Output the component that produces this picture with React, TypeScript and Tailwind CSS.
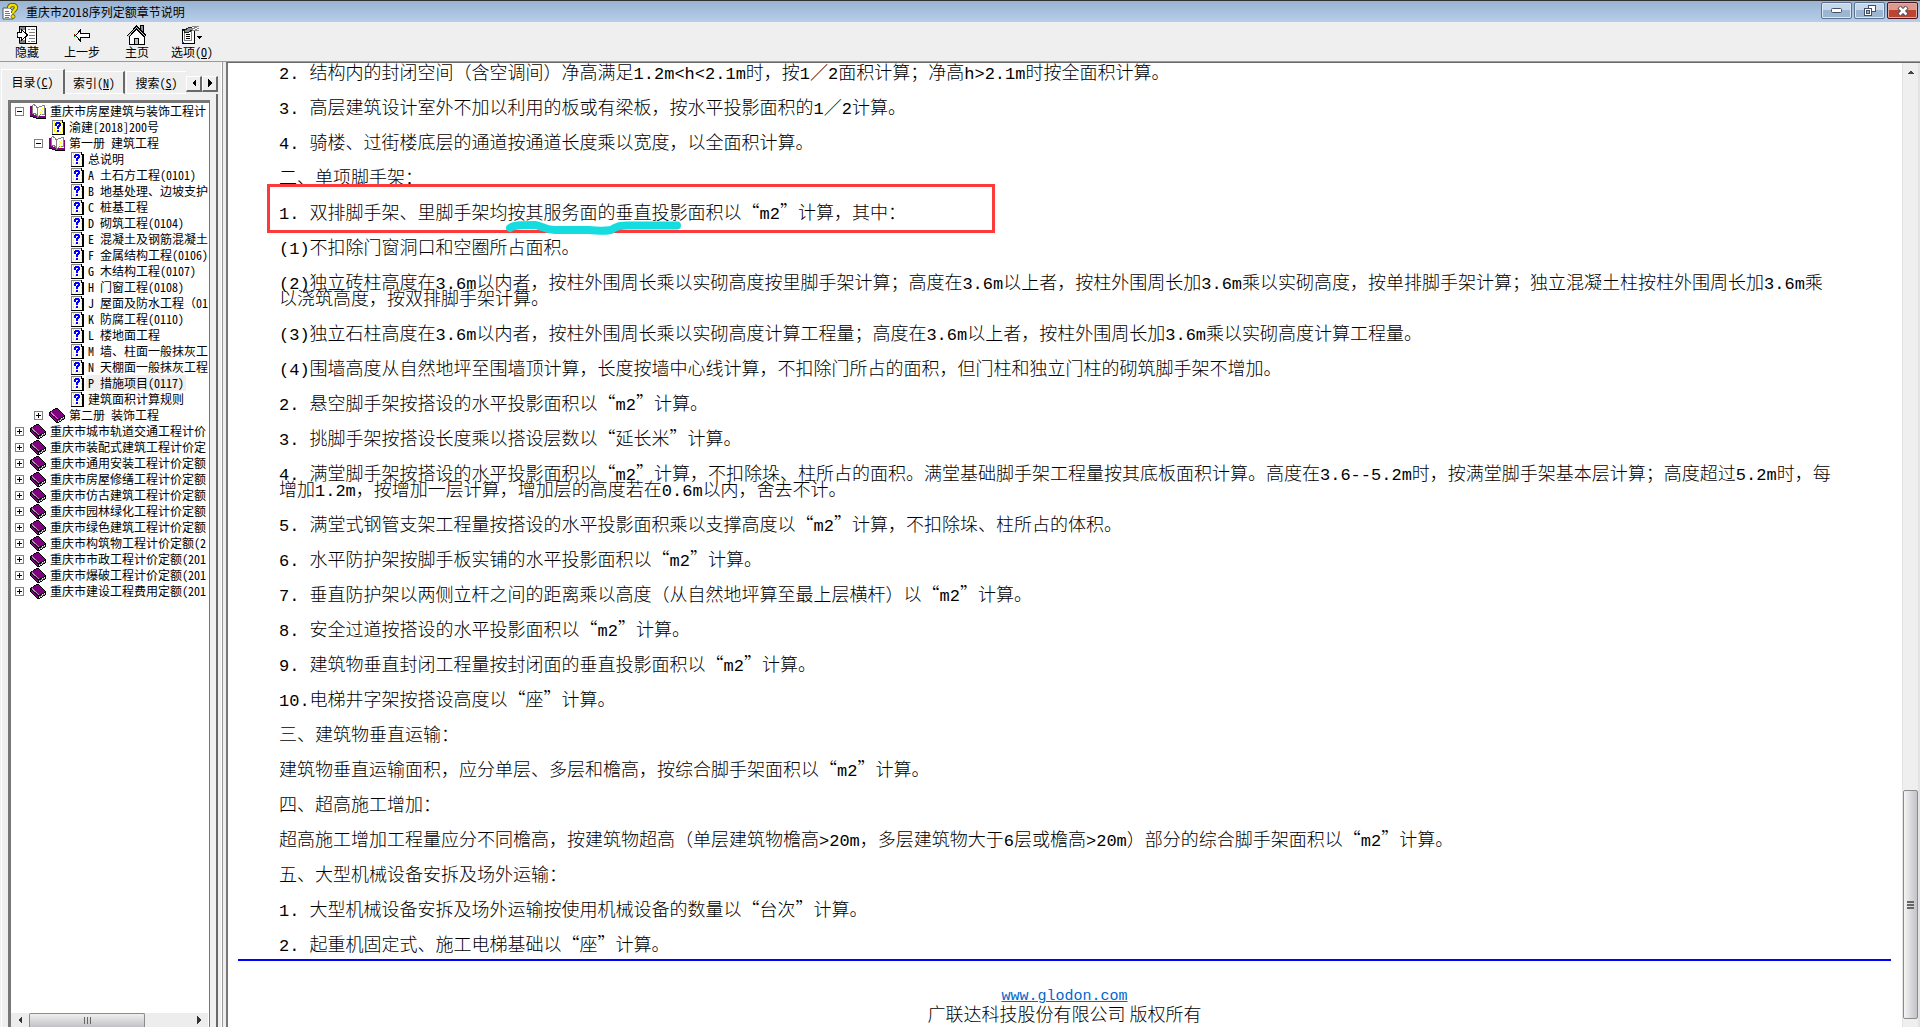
import React, { useState } from 'react';

const SONG = "font-['Noto_Sans_Mono_CJK_SC','Noto_Sans_CJK_SC',monospace]";

type TreeNode = {
  label: string;
  open?: boolean;
  children?: TreeNode[];
};

const tree: TreeNode[] = [
  {
    label: '重庆市房屋建筑与装饰工程计',
    open: true,
    children: [
      { label: '渝建[2018]200号' },
      {
        label: '第一册 建筑工程',
        open: true,
        children: [
          { label: '总说明' },
          { label: 'A 土石方工程(0101)' },
          { label: 'B 地基处理、边坡支护' },
          { label: 'C 桩基工程' },
          { label: 'D 砌筑工程(0104)' },
          { label: 'E 混凝土及钢筋混凝土' },
          { label: 'F 金属结构工程(0106)' },
          { label: 'G 木结构工程(0107)' },
          { label: 'H 门窗工程(0108)' },
          { label: 'J 屋面及防水工程（01' },
          { label: 'K 防腐工程(0110)' },
          { label: 'L 楼地面工程' },
          { label: 'M 墙、柱面一般抹灰工' },
          { label: 'N 天棚面一般抹灰工程' },
          { label: 'P 措施项目(0117)' },
          { label: '建筑面积计算规则' },
        ],
      },
      { label: '第二册 装饰工程', children: [] },
    ],
  },
  { label: '重庆市城市轨道交通工程计价', children: [] },
  { label: '重庆市装配式建筑工程计价定', children: [] },
  { label: '重庆市通用安装工程计价定额', children: [] },
  { label: '重庆市房屋修缮工程计价定额', children: [] },
  { label: '重庆市仿古建筑工程计价定额', children: [] },
  { label: '重庆市园林绿化工程计价定额', children: [] },
  { label: '重庆市绿色建筑工程计价定额', children: [] },
  { label: '重庆市构筑物工程计价定额(2', children: [] },
  { label: '重庆市市政工程计价定额(201', children: [] },
  { label: '重庆市爆破工程计价定额(201', children: [] },
  { label: '重庆市建设工程费用定额(201', children: [] },
];

const before = [
  '2. 结构内的封闭空间（含空调间）净高满足1.2m<h<2.1m时，按1／2面积计算；净高h>2.1m时按全面积计算。',
  '3. 高层建筑设计室外不加以利用的板或有梁板，按水平投影面积的1／2计算。',
  '4. 骑楼、过街楼底层的通道按通道长度乘以宽度，以全面积计算。',
  '二、单项脚手架：',
];

const marked = '1. 双排脚手架、里脚手架均按其服务面的垂直投影面积以“m2”计算，其中：';

const after = [
  '(1)不扣除门窗洞口和空圈所占面积。',
  '(2)独立砖柱高度在3.6m以内者，按柱外围周长乘以实砌高度按里脚手架计算；高度在3.6m以上者，按柱外围周长加3.6m乘以实砌高度，按单排脚手架计算；独立混凝土柱按柱外围周长加3.6m乘以浇筑高度，按双排脚手架计算。',
  '(3)独立石柱高度在3.6m以内者，按柱外围周长乘以实砌高度计算工程量；高度在3.6m以上者，按柱外围周长加3.6m乘以实砌高度计算工程量。',
  '(4)围墙高度从自然地坪至围墙顶计算，长度按墙中心线计算，不扣除门所占的面积，但门柱和独立门柱的砌筑脚手架不增加。',
  '2. 悬空脚手架按搭设的水平投影面积以“m2”计算。',
  '3. 挑脚手架按搭设长度乘以搭设层数以“延长米”计算。',
  '4. 满堂脚手架按搭设的水平投影面积以“m2”计算，不扣除垛、柱所占的面积。满堂基础脚手架工程量按其底板面积计算。高度在3.6--5.2m时，按满堂脚手架基本层计算；高度超过5.2m时，每增加1.2m，按增加一层计算，增加层的高度若在0.6m以内，舍去不计。',
  '5. 满堂式钢管支架工程量按搭设的水平投影面积乘以支撑高度以“m2”计算，不扣除垛、柱所占的体积。',
  '6. 水平防护架按脚手板实铺的水平投影面积以“m2”计算。',
  '7. 垂直防护架以两侧立杆之间的距离乘以高度（从自然地坪算至最上层横杆）以“m2”计算。',
  '8. 安全过道按搭设的水平投影面积以“m2”计算。',
  '9. 建筑物垂直封闭工程量按封闭面的垂直投影面积以“m2”计算。',
  '10.电梯井字架按搭设高度以“座”计算。',
  '三、建筑物垂直运输：',
  '建筑物垂直运输面积，应分单层、多层和檐高，按综合脚手架面积以“m2”计算。',
  '四、超高施工增加：',
  '超高施工增加工程量应分不同檐高，按建筑物超高（单层建筑物檐高>20m，多层建筑物大于6层或檐高>20m）部分的综合脚手架面积以“m2”计算。',
  '五、大型机械设备安拆及场外运输：',
  '1. 大型机械设备安拆及场外运输按使用机械设备的数量以“台次”计算。',
  '2. 起重机固定式、施工电梯基础以“座”计算。',
];

function HelpPage() {
  return (
    <svg width="13" height="15" viewBox="0 0 13 15" shapeRendering="crispEdges">
      <path d="M1 1H10L12 3V14H1Z" fill="#fffff0" />
      <path d="M2 2h1M4 3h1M2 5h1M2 8h1M2 11h1M4 12h1M8 12h1M10 5h1M10 8h1M10 11h1M8 2h1" stroke="#ffff00" strokeWidth="2" />
      <path d="M0.5 14V0.5H10" stroke="#808080" fill="none" />
      <path d="M10 0h1v2h2v13H0v-1h11V3h-1z" fill="#000" />
      <path d="M3 3h1V2h4v1h1v3H8v1H7v2H5V6h1V5h1V4H5v2H3zM5 10h2v2H5z" fill="#0000ff" />
    </svg>
  );
}

function ClosedBook() {
  return (
    <svg width="16" height="15" viewBox="0 0 16 15" shapeRendering="crispEdges">
      <path d="M0 4L7 0H9L16 8V11L9 15H8L0 8Z" fill="#000" />
      <path d="M1 4L7 1H8L15 8L8 11.5Z" fill="#800080" />
      <path d="M1 6L8 13V14L1 8Z" fill="#800080" />
      <path d="M9 12.5L15 9V10.5L9 14Z" fill="#fff" />
      <path d="M9 13L15 10" stroke="#808080" />
      <path d="M2 4.5L9 11" stroke="#c080c0" />
    </svg>
  );
}

function OpenBook() {
  return (
    <svg width="16" height="15" viewBox="0 0 16 15" shapeRendering="crispEdges">
      <path d="M0 2H2V10L8 12L14 12H15V4H16V14H7L0 12Z" fill="#800080" />
      <path d="M2.5 1.5L4 0.5L6 2L7.5 5V12L5 9.5H2.5Z" fill="#fff" stroke="#808080" />
      <path d="M7.5 4L10 2.5L14 1.5V10.5H11L7.5 13Z" fill="#fffff0" stroke="#808080" />
      <path d="M10 5h1M12 4h1M10 8h1M12 7h1M11 6h1M11 10h1" stroke="#ffff00" strokeWidth="1" />
      <path d="M0 12.5H2L7 14.5H16" stroke="#000" fill="none" />
    </svg>
  );
}

function HideIcon() {
  return (
    <svg width="20" height="18" viewBox="0 0 20 18" shapeRendering="crispEdges">
      <path d="M2 0.5H19.5V17.5H2Z" fill="#fff" stroke="#000" />
      <path d="M3 1h5v3H3zM3 14h5v3H3z" fill="#808080" />
      <path d="M8.5 1V17" stroke="#000" />
      <path d="M11 3.5h2M14 3.5h4M12 6.5h6M12 9.5h6M12 12.5h6M11 15.5h2M14 15.5h4" stroke="#808080" />
      <path d="M0.5 6.5H4.5V3.5L10.5 9L4.5 14.5V11.5H0.5Z" fill="#fff" stroke="#000" />
      <path d="M0 8h1v2H0z" fill="#c00000" />
      <path d="M2 17h1v1H2z" fill="#00a000" />
    </svg>
  );
}

function BackIcon() {
  return (
    <svg width="16" height="13" viewBox="0 0 16 13" shapeRendering="crispEdges">
      <path d="M1.5 6.5L6.5 1V4.5H15V8.5H6.5V12Z" fill="#fff" stroke="#000" />
      <path d="M0 5h1v2H0z" fill="#c00000" />
      <path d="M0 7h1v1H0z" fill="#00a000" />
    </svg>
  );
}

function HomeIcon() {
  return (
    <svg width="20" height="20" viewBox="0 0 20 20" shapeRendering="crispEdges">
      <path d="M13.5 7V0.5H16.5V10" fill="#909090" stroke="#000" />
      <path d="M2.5 10.5L9.5 3L16.5 10.5V19.5H2.5Z" fill="#fff" />
      <path d="M2.5 11V19.5H17.5V11" fill="none" stroke="#000" />
      <path d="M1 11.5L9.5 2.5L18.5 11.5" fill="none" stroke="#000" strokeWidth="3" />
      <path d="M1 11.5L9.5 2.5L18.5 11.5" fill="none" stroke="#c8c8c8" />
      <path d="M7.5 19V13.5H11.5V19" fill="#c0c0c0" stroke="#000" />
    </svg>
  );
}

function OptionsIcon() {
  return (
    <svg width="21" height="18" viewBox="0 0 21 18" shapeRendering="crispEdges">
      <path d="M0.5 3.5H12.5V17.5H0.5Z" fill="#fff" stroke="#000" />
      <path d="M2.5 5.5H9.5V14.5H2.5Z" fill="#fff" stroke="#808080" />
      <path d="M4 8.5h4M4 10.5h4M4 12.5h4" stroke="#000" />
      <path d="M2 4.5L7 1.5H10V4L6 6.5H3Z" fill="#909090" stroke="#222" />
      <path d="M10 0h7v5h-7z" fill="#888" />
      <path d="M10 1h2v1h-2zM13 2h2v1h-2zM11 3h2v1h-2zM15 1h2v1h-2zM15 3h2v1h-2z" fill="#fff" />
      <path d="M0 16h2v1H0z" fill="#2040c0" />
      <path d="M15 10H20V11H19V12H18V13H17V12H16V11H15Z" fill="#000" />
    </svg>
  );
}

function AppIcon() {
  return (
    <svg width="16" height="17" viewBox="0 0 16 17">
      <path d="M1 5H8L11 8V16H1Z" fill="#fff" stroke="#555" />
      <path d="M3 8.5h4M3 10.5h5M3 12.5h5M3 14.5h4" stroke="#777" />
      <path d="M7 5C7 1 14 1 14 4.5C14 7 11 7 11 10" fill="none" stroke="#4a4a00" strokeWidth="4" />
      <path d="M7 5C7 1 14 1 14 4.5C14 7 11 7 11 10" fill="none" stroke="#f5e000" strokeWidth="2.5" />
      <circle cx="11" cy="13.5" r="2" fill="#f5e000" stroke="#4a4a00" strokeWidth="0.7" />
    </svg>
  );
}

function Arrow({ d }: { d: string }) {
  return (
    <svg width="8" height="8" viewBox="0 0 8 8" shapeRendering="crispEdges">
      <path d={d} fill="currentColor" />
    </svg>
  );
}

function TitleBar() {
  const btn =
    'flex h-[17px] w-[31px] items-center justify-center rounded-[2px] border border-[#5d7290] bg-linear-to-b from-[#c5d7ea] from-50% to-[#9cb5d1] to-50% shadow-[inset_0_0_0_1px_#dbe7f3]';
  return (
    <header className="flex h-[22px] shrink-0 items-center justify-between border-t border-[#303030] bg-linear-to-b from-[#98b4d3] to-[#b6cee9] px-[2px]">
      <div className="flex items-center gap-2">
        <AppIcon />
        <h1 className="font-['Noto_Sans_CJK_SC',sans-serif] text-[12px] leading-5 text-black">重庆市2018序列定额章节说明</h1>
      </div>
      <div className="flex gap-[2px] self-start pt-px">
        <button aria-label="最小化" className={btn}>
          <svg width="11" height="5" viewBox="0 0 11 5">
            <rect x="0.5" y="0.5" width="10" height="4" rx="1" fill="#fff" stroke="#454f63" />
          </svg>
        </button>
        <button aria-label="还原" className={btn}>
          <svg width="12" height="11" viewBox="0 0 12 11" shapeRendering="crispEdges">
            <path d="M4.5 0.5H11.5V6.5H4.5Z" fill="#fff" stroke="#454f63" />
            <path d="M0.5 3.5H7.5V10.5H0.5Z" fill="#fff" stroke="#454f63" />
            <path d="M2.5 5.5H5.5V8.5H2.5Z" fill="#9cb5d1" stroke="#454f63" />
          </svg>
        </button>
        <button
          aria-label="关闭"
          className="flex h-[17px] w-[31px] items-center justify-center rounded-[2px] border border-[#4a1420] bg-linear-to-b from-[#dc9a8e] from-50% to-[#bd4530] to-50% shadow-[inset_0_0_0_1px_#e5aaa0]"
        >
          <svg width="12" height="10" viewBox="0 0 12 10">
            <path d="M2 1L10 9M10 1L2 9" stroke="#4b4d61" strokeWidth="4.5" />
            <path d="M2.5 1.5L9.5 8.5M9.5 1.5L2.5 8.5" stroke="#fff" strokeWidth="2.5" />
          </svg>
        </button>
      </div>
    </header>
  );
}

function ToolButton({ icon, children }: { icon: React.ReactNode; children: React.ReactNode }) {
  return (
    <button className="flex w-[54px] flex-col items-center">
      <span className="flex h-[20px] items-center">{icon}</span>
      <span className="text-[12px] leading-[14px] whitespace-nowrap">{children}</span>
    </button>
  );
}

function Toolbar() {
  return (
    <div role="toolbar" className="flex h-[39px] shrink-0 items-start gap-px bg-[#efefef] pt-[3px]">
      <ToolButton icon={<HideIcon />}>隐藏</ToolButton>
      <ToolButton icon={<BackIcon />}>上一步</ToolButton>
      <ToolButton icon={<HomeIcon />}>主页</ToolButton>
      <ToolButton icon={<OptionsIcon />}>
        选项(<u>O</u>)
      </ToolButton>
    </div>
  );
}

function TreeItem({ node, selected, onSelect }: { node: TreeNode; selected: string; onSelect: (s: string) => void }) {
  const [open, setOpen] = useState(!!node.open);
  return (
    <li>
      <div className="flex h-4 items-center">
        {node.children ? (
          <button
            aria-label={open ? '折叠' : '展开'}
            onClick={() => setOpen(!open)}
            className="mr-[6px] flex size-[9px] shrink-0 items-center justify-center border border-[#808080] bg-white"
          >
            <svg width="5" height="5" viewBox="0 0 5 5" shapeRendering="crispEdges">
              <path d={open ? 'M0 2h5v1H0z' : 'M0 2h5v1H0zM2 0h1v5H2z'} fill="#000" />
            </svg>
          </button>
        ) : (
          <span className="w-[15px] shrink-0" />
        )}
        <span className="flex w-4 shrink-0 justify-end">
          {!node.children ? <HelpPage /> : open ? <OpenBook /> : <ClosedBook />}
        </span>
        <button
          onClick={() => onSelect(node.label)}
          className={`ml-[2px] h-4 px-[2px] text-[12px] leading-4 whitespace-nowrap ${selected === node.label ? 'bg-[#efefef]' : ''}`}
        >
          {node.label}
        </button>
      </div>
      {open && node.children && (
        <ul className="pl-[19px]">
          {node.children.map((child) => (
            <TreeItem key={child.label} node={child} selected={selected} onSelect={onSelect} />
          ))}
        </ul>
      )}
    </li>
  );
}

function Sidebar() {
  const [selected, setSelected] = useState('P 措施项目(0117)');
  const arrowBtn =
    'flex size-4 items-center justify-center border-t border-l border-r-2 border-b-2 border-t-white border-l-white border-r-[#696969] border-b-[#696969]';
  return (
    <aside className="flex w-[218px] shrink-0 flex-col pt-[7px] pl-px">
      <div role="tablist" className="flex h-[25px] items-end text-[12px] leading-4">
        <button role="tab" aria-selected="true" className="h-[25px] w-[64px] border-t border-r-2 border-l border-t-white border-r-[#696969] border-l-white whitespace-nowrap">
          目录(<u>C</u>)
        </button>
        <button role="tab" aria-selected="false" className="h-[23px] w-[60px] border-t border-r-2 border-b border-t-white border-r-[#696969] border-b-white whitespace-nowrap">
          索引(<u>N</u>)
        </button>
        <button role="tab" aria-selected="false" className="ml-px h-[23px] w-[60px] border-t border-b border-l border-white whitespace-nowrap">
          搜索(<u>S</u>)
        </button>
        <div className="flex self-center pt-1">
          <button aria-label="向左" className={arrowBtn}>
            <Arrow d="M6 0V8L2 4Z" />
          </button>
          <button aria-label="向右" className={arrowBtn}>
            <Arrow d="M2 0V8L6 4Z" />
          </button>
        </div>
      </div>
      <div className="flex min-h-0 flex-1 flex-col border-r-2 border-l border-r-[#696969] border-l-white pt-[6px] pr-[6px] pl-[6px]">
        <div className="flex min-h-0 flex-1 flex-col border-t-3 border-r border-l-3 border-[#777] bg-white pr-px">
          <ul className="min-h-0 flex-1 overflow-hidden pl-[4px]">
            {tree.map((node) => (
              <TreeItem key={node.label} node={node} selected={selected} onSelect={setSelected} />
            ))}
          </ul>
          <div className="flex h-[14px] shrink-0 items-center bg-[#ededed] text-[#333]">
            <button aria-label="向左滚动" className="flex w-[18px] justify-center">
              <Arrow d="M6 0V8L2 4Z" />
            </button>
            <div className="flex h-[14px] w-[116px] items-center justify-center gap-[2px] rounded-t-[2px] border border-b-0 border-[#8b8b8b] bg-linear-to-b from-[#f0f0f0] to-[#c2c2c6]">
              <i className="h-[7px] w-px bg-[#666]" />
              <i className="h-[7px] w-px bg-[#666]" />
              <i className="h-[7px] w-px bg-[#666]" />
            </div>
            <span className="flex-1" />
            <button aria-label="向右滚动" className="flex w-[18px] justify-center">
              <Arrow d="M2 0V8L6 4Z" />
            </button>
          </div>
        </div>
      </div>
    </aside>
  );
}

// Latin runs take a typewriter face, everything else (quotes included) stays in the CJK one
function Prose({ text }: { text: string }) {
  return (
    <>
      {text.split(/([!-~]+ ?)/).map((part, i) =>
        i % 2 ? (
          <span key={i} className="font-['Liberation_Mono',monospace] text-[17px] leading-[0] font-normal">
            {part}
          </span>
        ) : (
          part
        ),
      )}
    </>
  );
}

function Article() {
  return (
    <main className="min-w-0 flex-1 overflow-hidden bg-white pr-[11px] pl-[10px] font-['Noto_Sans_CJK_SC',sans-serif] text-[18px] leading-4 font-light text-black">
      <article className="flex flex-col gap-[19px] pr-[55px] pl-[41px]">
        {before.map((t) => (
          <p key={t}>
            <Prose text={t} />
          </p>
        ))}
        <p className="relative">
          <Prose text={marked} />
          <span className="absolute -top-[19px] -left-3 h-[49px] w-[728px] border-3 border-[#fd3a3a]" />
          <svg className="absolute top-4 left-[226px]" width="178" height="18" viewBox="0 0 178 18">
            <path
              d="M5 9C8 6 14 6 30 6C38 7 40 11 50 11H84C92 12 100 12 106 11C112 7 114 7 122 6.5H172"
              fill="none"
              stroke="#15dcdf"
              strokeWidth="8"
              strokeLinecap="round"
              strokeLinejoin="round"
            />
          </svg>
        </p>
        {after.map((t) => (
          <p key={t}>
            <Prose text={t} />
          </p>
        ))}
      </article>
      <hr className="mt-2 h-[2px] border-0 bg-[#0000ff]" />
      <footer className="mt-7 flex flex-col items-center">
        <a href="#glodon" className="font-['Liberation_Mono',monospace] text-[15px] font-normal text-[#0066cc] underline">
          www.glodon.com
        </a>
        <p>广联达科技股份有限公司 版权所有</p>
      </footer>
    </main>
  );
}

function VerticalScrollbar() {
  return (
    <div className="flex w-[18px] shrink-0 flex-col items-center border-r-2 border-l border-[#e3e3e3] bg-[#efefef] text-[#444]">
      <button aria-label="向上滚动" className="flex h-[17px] items-center">
        <Arrow d="M4 2L7 6H1Z" />
      </button>
      <span className="grow-[712] basis-0" />
      <div className="flex w-[15px] grow-[227] basis-0 flex-col items-center justify-center gap-px rounded-[2px] border border-[#8b8b8b] bg-linear-to-r from-[#f4f4f4] to-[#c2c2c8]">
        <i className="h-[2px] w-[7px] bg-[#666]" />
        <i className="h-[2px] w-[7px] bg-[#666]" />
        <i className="h-[2px] w-[7px] bg-[#666]" />
      </div>
      <span className="h-2" />
    </div>
  );
}

export default function App() {
  return (
    <div lang="zh-CN" className={`flex h-screen flex-col overflow-hidden bg-[#efefef] text-black ${SONG}`}>
      <TitleBar />
      <Toolbar />
      <div className="flex min-h-0 flex-1 border-t border-[#999]">
        <Sidebar />
        <div className="w-[8px] shrink-0 border-r-3 border-l-3 border-[#efefef] bg-[#999]">
          <div className="h-full w-px bg-white" />
        </div>
        <div className="flex min-w-0 flex-1 border-t border-l-2 border-t-[#696969] border-l-[#777]">
          <Article />
          <VerticalScrollbar />
        </div>
      </div>
    </div>
  );
}
